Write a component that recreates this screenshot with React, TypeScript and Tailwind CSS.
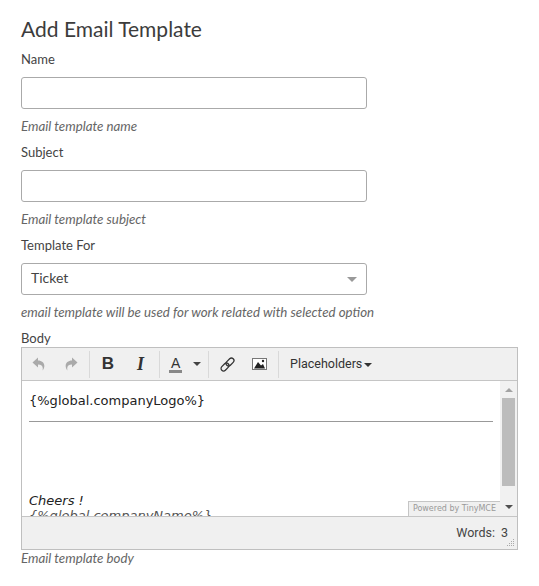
import React from 'react';

const sans = 'font-["Lato",sans-serif]';

const Field = ({ label, help, children }: { label: string; help: string; children: React.ReactNode }) => (
  <div className="h-[93px]">
    <label className="block h-[27px] text-[13px] leading-[18px] text-[#444]">{label}</label>
    {children}
    <p className="mt-[8px] text-[13.3px] leading-[18px] italic text-[#666]">{help}</p>
  </div>
);

const Divider = () => <div className="mx-[2px] h-[27px] w-px bg-[#d9d9d9]" />;

const App = () => (
  <div className={`${sans} h-[586px] w-[539px] overflow-hidden bg-white pl-[21px]`}>
    <h1 className="h-[50px] pt-[14px] text-[21px] leading-[30px] text-[#3c3c3c]">Add Email Template</h1>

    <Field label="Name" help="Email template name">
      <input className="block h-[32px] w-[346px] rounded-[3px] border border-[#aaa] bg-white" />
    </Field>
    <Field label="Subject" help="Email template subject">
      <input className="block h-[32px] w-[346px] rounded-[3px] border border-[#aaa] bg-white" />
    </Field>
    <Field label="Template For" help="email template will be used for work related with selected option">
      <div className="flex h-[32px] w-[346px] items-center justify-between rounded-[3px] border border-[#aaa] bg-white pl-[9px] pr-[9px]">
        <span className="-mt-[3px] text-[14px] text-[#444]">Ticket</span>
        <span className="h-0 w-0 border-x-[5px] border-t-[5px] border-x-transparent border-t-[#999]" />
      </div>
    </Field>

    <div className="h-[18px] text-[13px] leading-[18px] text-[#444]">Body</div>

    <div className="w-[497px] border border-[#bfbfbf]">
      <div className="flex h-[33px] items-center border-b border-[#c5c5c5] bg-[#f0f0f0] pl-[1px] font-['Roboto',sans-serif]">
        <button className="flex h-[24px] w-[32px] items-center justify-center">
          <svg width="14" height="14" viewBox="0 0 14 14" fill="#aaa"><path d="M6 0.500V3.500C11.500 3.500 14.500 8.500 10.500 13.500C11.500 10 10 7.500 6 7.500V10.500L0.500 5.500z" /></svg>
        </button>
        <button className="flex h-[24px] w-[32px] items-center justify-center">
          <svg width="14" height="14" viewBox="0 0 14 14" fill="#aaa"><path d="M8 0.500V3.500C2.500 3.500 -0.500 8.500 3.500 13.500C2.500 10 4 7.500 8 7.500V10.500L13.500 5.500z" /></svg>
        </button>
        <Divider />
        <button className="flex h-[24px] w-[32px] items-center justify-center font-['Liberation_Sans',sans-serif] text-[17px] font-bold text-[#333]">B</button>
        <button className="flex h-[24px] w-[33px] items-center justify-center font-['Liberation_Serif',serif] text-[18px] font-bold italic text-[#333]">I</button>
        <Divider />
        <button className="flex h-[24px] w-[44px] items-center justify-between pl-[7px] pr-[5px]">
          <span className="border-b-[3px] border-[#888] px-[2px] font-['Liberation_Sans',sans-serif] text-[14px] leading-[14px] text-[#333]">A</span>
          <span className="h-0 w-0 border-x-[4px] border-t-[4px] border-x-transparent border-t-[#444]" />
        </button>
        <Divider />
        <button className="flex h-[24px] w-[32px] items-center justify-center">
          <svg width="15" height="15" viewBox="0 0 15 15" fill="none" stroke="#333" strokeWidth="1.300">
            <rect x="7.500" y="0.500" width="5" height="9" rx="2.500" transform="rotate(45 10 5)" />
            <rect x="2.500" y="5.500" width="5" height="9" rx="2.500" transform="rotate(45 5 10)" />
          </svg>
        </button>
        <button className="flex h-[24px] w-[33px] items-center justify-center">
          <svg width="15" height="12" viewBox="0 0 15 12">
            <rect x="0.500" y="0.500" width="14" height="11" fill="#fff" stroke="#777" />
            <path d="M2 10.500L6 4l3 3.500 2-1.500 2 4.500z" fill="#222" />
            <circle cx="11" cy="3" r="1.200" fill="#222" />
          </svg>
        </button>
        <Divider />
        <button className="flex h-[24px] items-center gap-[2px] pl-[9px] pt-[1px] text-[12.5px] text-[#333]">
          Placeholders
          <span className="h-0 w-0 border-x-[4px] border-t-[4px] border-x-transparent border-t-[#333]" />
        </button>
      </div>

      <div className="relative flex h-[135px] overflow-hidden bg-white">
        <div className="w-[478px] pl-[7px] pr-[7px] pt-[11px] font-['DejaVu_Sans',sans-serif] text-[13px] leading-[18px] text-[#222]">
          <p>{'{%global.companyLogo%}'}</p>
          <hr className="mt-[11px] border-t border-[#999]" />
          <p className="mt-[70px] italic">Cheers !</p>
          <p className="-mt-[3px] italic text-[#555]">{'{%global.companyName%}'}</p>
        </div>
        <div className="flex w-[17px] flex-col items-center bg-[#f1f1f1]">
          <div className="mt-[7px] h-0 w-0 border-x-[4px] border-b-[4px] border-x-transparent border-b-[#a3a3a3]" />
          <div className="mt-[6px] h-[88px] w-[13px] bg-[#bcbcbc]" />
          <div className="mt-auto mb-[7px] h-0 w-0 border-x-[4px] border-t-[4px] border-x-transparent border-t-[#505050]" />
        </div>
        <div className="absolute bottom-0 right-[17px] flex h-[15px] items-center border-l border-t border-[#c5c5c5] bg-[#f0f0f0] px-[4px] font-['DejaVu_Sans',sans-serif] text-[8px] text-[#999]">
          Powered by TinyMCE
        </div>
      </div>

      <div className="relative flex h-[33px] items-center justify-end gap-[6px] border-t border-[#c5c5c5] bg-[#f0f0f0] pr-[9px] font-['Roboto',sans-serif] text-[12.5px] text-[#444]">
        <span>Words:</span>
        <span>3</span>
        <svg className="absolute bottom-[2px] right-[2px]" width="10" height="8" viewBox="0 0 10 8" fill="#aaa">
          <rect x="8" y="0" width="1" height="1" /><rect x="6" y="2" width="1" height="1" /><rect x="8" y="2" width="1" height="1" />
          <rect x="4" y="4" width="1" height="1" /><rect x="6" y="4" width="1" height="1" /><rect x="8" y="4" width="1" height="1" />
          <rect x="2" y="6" width="1" height="1" /><rect x="4" y="6" width="1" height="1" /><rect x="6" y="6" width="1" height="1" /><rect x="8" y="6" width="1" height="1" />
        </svg>
      </div>
    </div>
    <p className="-mt-[1px] text-[13.3px] leading-[18px] italic text-[#666]">Email template body</p>
  </div>
);

export default App;
